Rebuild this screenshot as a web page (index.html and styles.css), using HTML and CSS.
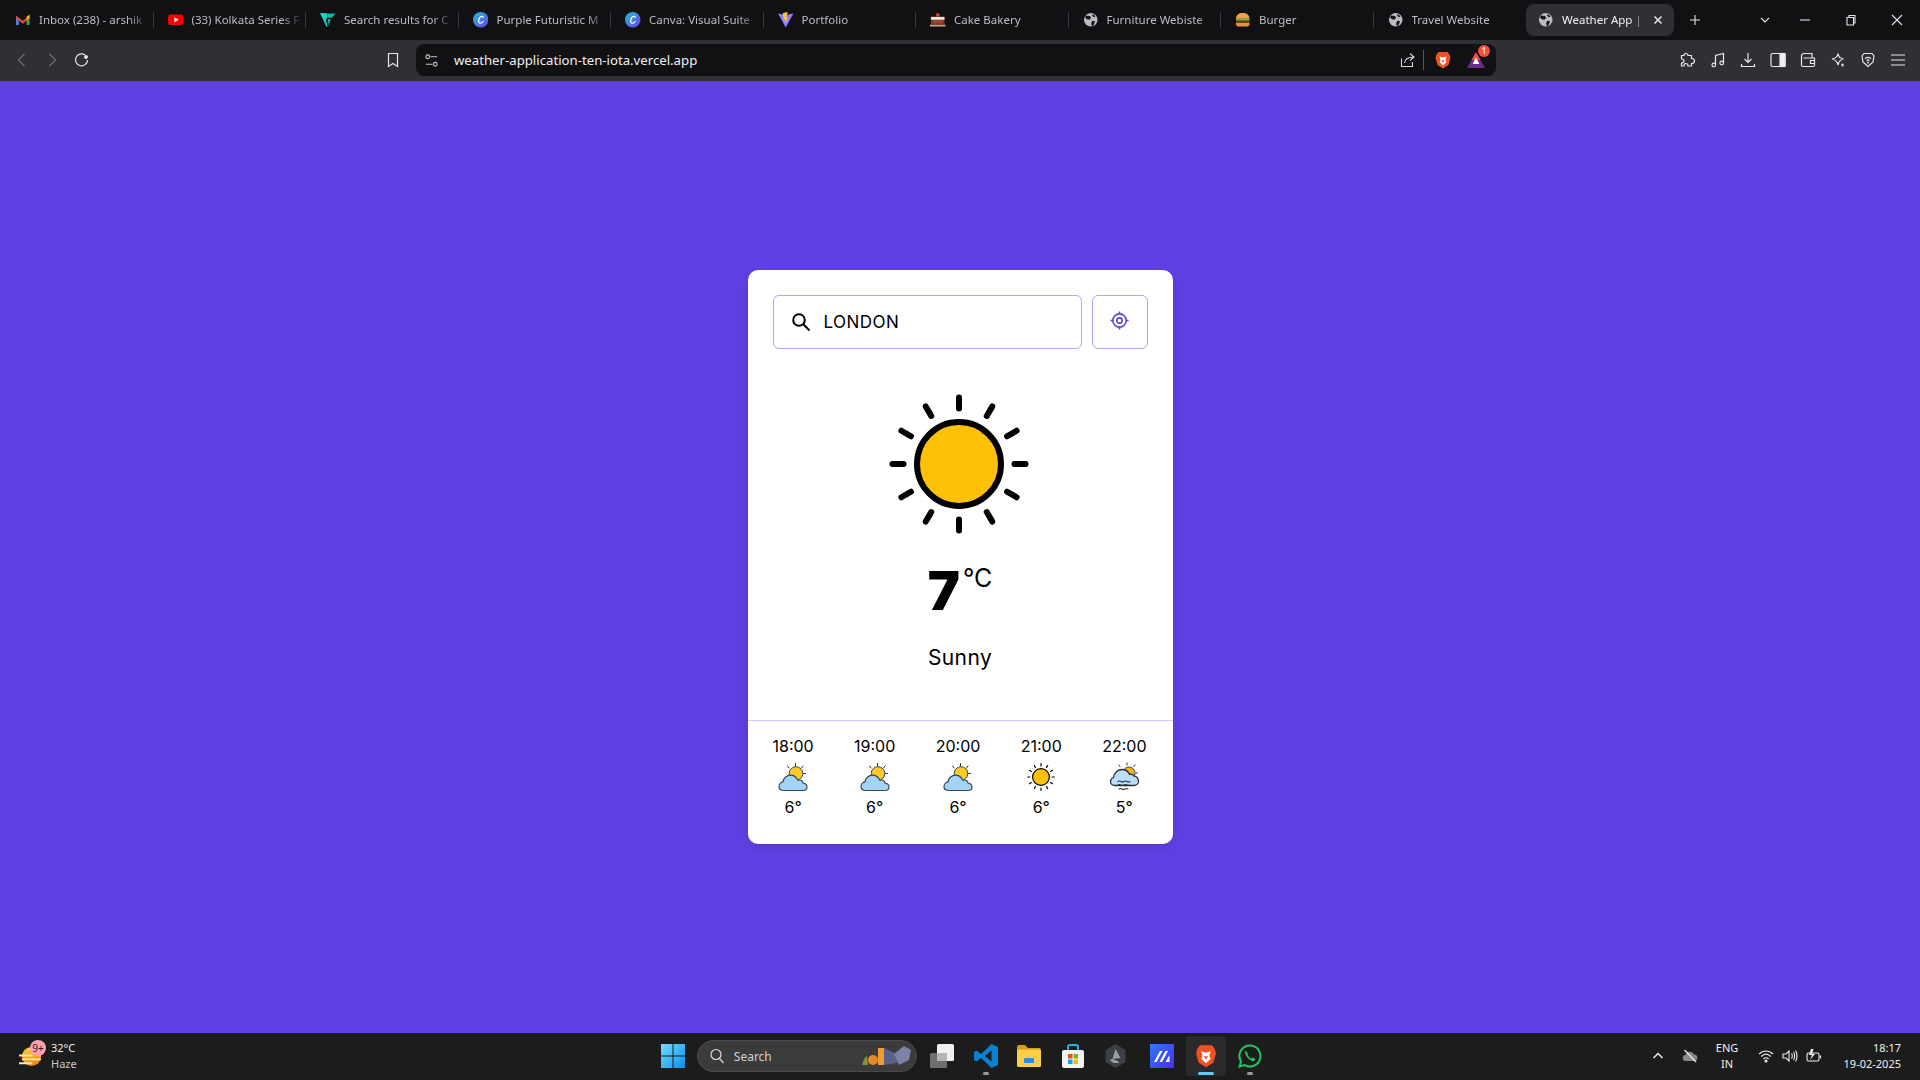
FILE: index.html
```html
<!DOCTYPE html>
<html lang="en">
<head>
<meta charset="utf-8">
<title>Weather App</title>
<link rel="stylesheet" href="styles.css">
</head>
<body>
<svg class="defs" width="0" height="0" aria-hidden="true">
  <defs>
    <symbol id="globe" viewBox="0 0 16 16">
      <circle cx="8" cy="8" r="7" fill="#b9bcc2"/>
      <path d="M3 3.500 7 4l1.500 2L6.500 8 4 7.500 2 5.500ZM9.500 9l3 .5-1.500 4-2 1.200-.5-3.200ZM10 2l3 2.500-1.500 1L9.500 4Z" fill="#17171b"/>
    </symbol>
    <symbol id="sun" viewBox="-75 -75 150 150">
      <g stroke="#000" stroke-width="6" stroke-linecap="round">
        <path d="M0-55.500V-66.500"/>
        <path d="M0-55.500V-66.500" transform="rotate(30)"/>
        <path d="M0-55.500V-66.500" transform="rotate(60)"/>
        <path d="M0-55.500V-66.500" transform="rotate(90)"/>
        <path d="M0-55.500V-66.500" transform="rotate(120)"/>
        <path d="M0-55.500V-66.500" transform="rotate(150)"/>
        <path d="M0-55.500V-66.500" transform="rotate(180)"/>
        <path d="M0-55.500V-66.500" transform="rotate(210)"/>
        <path d="M0-55.500V-66.500" transform="rotate(240)"/>
        <path d="M0-55.500V-66.500" transform="rotate(270)"/>
        <path d="M0-55.500V-66.500" transform="rotate(300)"/>
        <path d="M0-55.500V-66.500" transform="rotate(330)"/>
      </g>
      <circle r="42" fill="#ffc107" stroke="#000" stroke-width="6"/>
    </symbol>
    <symbol id="cloudsun" viewBox="0 0 30 30">
      <g stroke="#333" stroke-width="1" stroke-linecap="round">
        <path d="M17.500 1.500V4M9.500 4l1.500 2M25 4l-1.500 2M27.500 11.500H25"/>
      </g>
      <circle cx="18" cy="11.500" r="6.800" fill="#ffca28" stroke="#37474f" stroke-width="1"/>
      <path d="M6 28.500C3 28.500 1 27 1 24.500 1 22 3 20 5 19.800 5.500 16 9 13.200 12.500 13.200 16 13.200 18.500 15.500 20 18.200 21.500 17.800 23 18 24 19 24.600 19.600 25 20.500 25 21 27.500 21.500 29 23 29 25 29 27.500 27 28.500 25 28.500Z" fill="#a4d3f8" stroke="#37474f" stroke-width="1.200"/>
    </symbol>
    <symbol id="fog" viewBox="0 0 30 30">
      <g stroke="#333" stroke-width="1" stroke-linecap="round">
        <path d="M18 1V3M10 3l1 1.500M26 3l-1 1.500M28.500 11H27M28 16.500l-1-.5"/>
      </g>
      <circle cx="20" cy="11" r="6" fill="#fbb117" stroke="#37474f" stroke-width="1"/>
      <path d="M6 23.500C3 23.500 1.500 21.500 1.500 19.500 1.500 17.500 3 16 4.500 15.500 5 11 9 7.500 13 7.500 17 7.500 19.500 10 20.500 12.500 22 12 24 12.500 25 14 27.500 14 29.500 16.500 29.500 19 29.500 22 27 23.500 25 23.500Z" fill="#bbdefb" stroke="#263238" stroke-width="1.300"/>
      <g fill="none" stroke="#263238" stroke-width="1.100" stroke-linecap="round">
        <path d="M9 19.500q1.500-1 3 0t3 0 3 0 3 0"/>
        <path d="M9 23q1.500-1 3 0t3 0 3 0 3 0"/>
        <path d="M10 27q1.500-1 3 0t3 0 3 0"/>
      </g>
    </symbol>
  </defs>
</svg>

<header class="tabstrip">
  <div class="tab sep">
    <svg class="fav" viewBox="0 0 16 16"><path d="M1 4v9.500h3V7.500L1 4Z" fill="#4285f4"/><path d="M15 4v9.500h-3V7.500L15 4Z" fill="#34a853"/><path d="M1 3.500 8 9l7-5.500V6.500L8 12 1 6.500Z" fill="#ea4335"/><path d="M12 4.800 15 2.500V6l-3 2.500Z" fill="#fbbc04"/></svg>
    <span class="title">Inbox (238) - arshik</span>
  </div>
  <div class="tab sep">
    <svg class="fav" viewBox="0 0 16 16"><rect y="2.500" width="16" height="11" rx="3" fill="#f00"/><path d="M6.500 5.500v5L11 8Z" fill="#fff"/></svg>
    <span class="title">(33) Kolkata Series F</span>
  </div>
  <div class="tab sep">
    <svg class="fav" viewBox="0 0 16 16"><path d="M0 1h6.500L8 5 6 8.500 8 15h-1.500Z" fill="#19d3c5"/><path d="M7 1.500h9L12 6H8.500ZM8 7.500h3L9 14Z" fill="#13b8ab"/></svg>
    <span class="title">Search results for C</span>
  </div>
  <div class="tab sep">
    <svg class="fav" viewBox="0 0 16 16"><defs><linearGradient id="cv" x1="0" y1="0" x2="1" y2="1"><stop offset="0" stop-color="#1dc4d6"/><stop offset="1" stop-color="#6a3df0"/></linearGradient></defs><circle cx="8" cy="8" r="8" fill="url(#cv)"/><path d="M10.500 5.500C10.500 4 8 4 6.800 6S5.200 11 7 11.500C8.500 11.800 10 10.500 10.500 9.800" fill="none" stroke="#fff" stroke-width="1.300" stroke-linecap="round"/></svg>
    <span class="title">Purple Futuristic M</span>
  </div>
  <div class="tab sep">
    <svg class="fav" viewBox="0 0 16 16"><circle cx="8" cy="8" r="8" fill="url(#cv)"/><path d="M10.500 5.500C10.500 4 8 4 6.800 6S5.200 11 7 11.500C8.500 11.800 10 10.500 10.500 9.800" fill="none" stroke="#fff" stroke-width="1.300" stroke-linecap="round"/></svg>
    <span class="title">Canva: Visual Suite</span>
  </div>
  <div class="tab sep">
    <svg class="fav" viewBox="0 0 16 16"><path d="M0 1.500 8 3l8-1.500L8 16Z" fill="#8d7bff"/><path d="M5 1l5-1-1.500 6 2-.5L7 13l.8-5.500-2 .5Z" fill="#ffc81f"/></svg>
    <span class="title">Portfolio</span>
  </div>
  <div class="tab sep">
    <svg class="fav" viewBox="0 0 16 16"><rect x="0" y="13" width="16" height="2" fill="#c9a27c"/><rect x="1" y="6" width="14" height="7" fill="#7b3b2c"/><rect x="1" y="5" width="14" height="3" fill="#efe4d6"/><rect x="3" y="9" width="10" height="2" fill="#b5443a"/><circle cx="8" cy="3" r="2" fill="#d43a3a"/></svg>
    <span class="title">Cake Bakery</span>
  </div>
  <div class="tab sep">
    <svg class="fav"><use href="#globe"/></svg>
    <span class="title">Furniture Webiste</span>
  </div>
  <div class="tab sep">
    <svg class="fav" viewBox="0 0 16 16"><path d="M1 7C1 3 4 1 8 1s7 2 7 6Z" fill="#f2a24a"/><rect x="1" y="7" width="14" height="2" fill="#7db546"/><rect x="1" y="9" width="14" height="2" fill="#6b3a22"/><path d="M1 11h14v1.500c0 1.500-1 2.500-2.500 2.500h-9C2 15 1 14 1 12.500Z" fill="#e89238"/></svg>
    <span class="title">Burger</span>
  </div>
  <div class="tab">
    <svg class="fav"><use href="#globe"/></svg>
    <span class="title">Travel Website</span>
  </div>
  <div class="tab active">
    <svg class="fav"><use href="#globe"/></svg>
    <span class="title">Weather App |</span>
    <svg class="tabclose" viewBox="0 0 10 10"><path d="M1.500 1.500l7 7M8.500 1.500l-7 7"/></svg>
  </div>
  <button class="ctl plus"><svg viewBox="0 0 12 12"><path d="M6 1v10M1 6h10"/></svg></button>
  <div class="winctls">
    <button class="ctl tabmenu"><svg viewBox="0 0 12 12"><path d="M2 4l4 4 4-4"/></svg></button>
    <button class="ctl"><svg viewBox="0 0 12 12"><path d="M1 6h10"/></svg></button>
    <button class="ctl"><svg viewBox="0 0 12 12"><path d="M2 3.500h6.500V11H2ZM4 3.500V1.500h6V9H8.500"/></svg></button>
    <button class="ctl"><svg viewBox="0 0 12 12"><path d="M1 1l10 10M11 1L1 11"/></svg></button>
  </div>
</header>

<nav class="toolbar">
  <div class="navbtns">
    <button class="tbtn dim"><svg viewBox="0 0 16 16"><path d="M10.500 2 4.500 8l6 6"/></svg></button>
    <button class="tbtn dim"><svg viewBox="0 0 16 16"><path d="M5.500 2l6 6-6 6"/></svg></button>
    <button class="tbtn"><svg viewBox="0 0 16 16"><path d="M13.500 8A6 6 0 1 1 11 3"/><circle cx="12" cy="5" r="1.300" fill="#fff"/></svg></button>
  </div>
  <button class="tbtn bookmark"><svg viewBox="0 0 16 16"><path d="M3.500 1.500h9v13L8 11.500l-4.500 3Z"/></svg></button>
  <div class="addr">
    <svg class="sliders" viewBox="0 0 16 16"><circle cx="4" cy="4" r="2"/><path d="M7 4h7M2 12h7"/><circle cx="12" cy="12" r="2"/></svg>
    <span class="url">weather-application-ten-iota.vercel.app</span>
    <svg class="share" viewBox="0 0 16 16"><path d="M10 1.500l4 3.500-4 3.500M14 5C8 5 5 7.500 4.500 11M12.500 10v4.500H1.500v-8"/></svg>
    <span class="addrsep"></span>
    <svg class="lion" viewBox="0 0 16 18"><path d="M3.500 1h9l2 2.500L15.500 7l-2 7L8 17.500 2.500 14l-2-7 1-3.500Z" fill="#f1501f"/><path d="M4.500 5.500 8 6.500l3.500-1-1 3.500 1 2L8 14.500 4.500 11l1-2Z" fill="#fff"/><path d="M6.500 9h1l.5 1 .5-1h1L8 12Z" fill="#f1501f"/></svg>
    <span class="rewards">
      <svg viewBox="0 0 16 14"><path d="M8 0l8 14H0Z" fill="#6b2d8b"/><path d="M8 0l4 7H4Z" fill="#f2503a"/><path d="M8 4.500l3 6H5Z" fill="#fff"/></svg>
      <b class="rbadge">1</b>
    </span>
  </div>
  <div class="tools">
    <button class="tbtn"><svg viewBox="0 0 16 16"><path d="M6 1.500c1.500 0 2 1 2 2h3.500v3c1.500 0 3 .5 3 2.500s-1.500 2.500-3 2.500v2.500H8c0-1.500-.5-2.500-2-2.500s-2 1-2 2.500H1.500V11C3 11 4 10.300 4 9S3 7 1.500 7V3.500H4c0-1 .5-2 2-2Z"/></svg></button>
    <button class="tbtn"><svg viewBox="0 0 16 16"><path d="M5.500 13V3.500l8-2V11"/><circle cx="3.800" cy="13" r="1.800"/><circle cx="11.700" cy="11" r="1.800"/></svg></button>
    <button class="tbtn"><svg viewBox="0 0 16 16"><path d="M8 1v9M4.500 7 8 10.500 11.500 7M1.500 12v2.500h13V12"/></svg></button>
    <button class="tbtn"><svg viewBox="0 0 16 16"><rect x="1" y="1.500" width="14" height="13" rx="1.500"/><rect x="10" y="1.500" width="5" height="13" fill="#f0f0f0"/></svg></button>
    <button class="tbtn"><svg viewBox="0 0 16 16"><path d="M1.500 4V13a1.500 1.500 0 0 0 1.500 1.500h10a1.500 1.500 0 0 0 1.500-1.500V6H3.500"/><path d="M1.500 4A2.500 2.500 0 0 1 4 1.500h8V6M14.500 8.500H10.500v3h4"/></svg></button>
    <button class="tbtn"><svg viewBox="0 0 16 16"><path d="M8 1.500c.5 3.500 2 5 5.500 5.500-2.500.5-3.500 1.500-4.500 3L8 13C7.500 10 5.500 8 2 7 5.500 6.500 7.500 5 8 1.500Z"/><path d="M12.500 11.500v3M11 13h3"/></svg></button>
    <button class="tbtn"><svg viewBox="0 0 16 16"><path d="M4 1.500h8l2 2.500-1 6-5 4.500L3 10 2 4Z"/><path d="M5 6.500c2-1.500 4-1.500 6 0M6.500 8.500c1-.7 2-.7 3 0"/><circle cx="8" cy="10.500" r=".4"/></svg></button>
    <button class="tbtn"><svg viewBox="0 0 16 16"><path d="M1 3h14M1 8h14M1 13h14"/></svg></button>
  </div>
</nav>

<main class="stage">
  <section class="card">
    <div class="searchrow">
      <label class="searchbox">
        <svg class="mag" viewBox="0 0 20 20"><circle cx="8" cy="8" r="5.800"/><path d="M12.300 12.300 18.500 18.500"/></svg>
        <span class="query">LONDON</span>
      </label>
      <button class="locate">
        <svg viewBox="0 0 20 20"><circle cx="10" cy="10" r="7"/><circle cx="10" cy="10" r="2.800"/><path d="M10 .5V3M10 17v2.500M.5 10H3M17 10h2.500"/></svg>
      </button>
    </div>
    <div class="current">
      <svg class="bigsun"><use href="#sun"/></svg>
      <div class="temp"><span class="deg">7</span><span class="unit">°C</span></div>
      <p class="cond">Sunny</p>
    </div>
    <ul class="forecast">
      <li class="slot"><span class="hour">18:00</span><svg class="fi"><use href="#cloudsun"/></svg><span class="ft">6°</span></li>
      <li class="slot"><span class="hour">19:00</span><svg class="fi"><use href="#cloudsun"/></svg><span class="ft">6°</span></li>
      <li class="slot"><span class="hour">20:00</span><svg class="fi"><use href="#cloudsun"/></svg><span class="ft">6°</span></li>
      <li class="slot"><span class="hour">21:00</span><svg class="fi"><use href="#sun"/></svg><span class="ft">6°</span></li>
      <li class="slot"><span class="hour">22:00</span><svg class="fi"><use href="#fog"/></svg><span class="ft">5°</span></li>
    </ul>
  </section>
</main>

<footer class="taskbar">
  <div class="tb-left">
    <span class="wx-ico">
      <svg viewBox="0 0 24 22"><defs><linearGradient id="wx" x1="0" y1="0" x2="0" y2="1"><stop offset="0" stop-color="#ffd23c"/><stop offset="1" stop-color="#ef7d0a"/></linearGradient></defs><circle cx="13" cy="11" r="10" fill="url(#wx)"/><path d="M0 9h14v2H0ZM3 13h20v2H3ZM0 17h14v2H0Z" fill="#ffe9a8"/></svg>
      <b class="wx-badge">9+</b>
    </span>
    <div class="wx-text"><span class="wx-t">32°C</span><span class="wx-c">Haze</span></div>
  </div>
  <div class="tb-center">
    <svg class="app winlogo" viewBox="0 0 24 24"><defs><linearGradient id="wl" x1="0" y1="0" x2="1" y2="1"><stop offset="0" stop-color="#6fe0ff"/><stop offset="1" stop-color="#0f8dea"/></linearGradient></defs><path d="M0 0h11.500v11.500H0ZM12.500 0H24v11.500H12.500ZM0 12.500h11.500V24H0ZM12.500 12.500H24V24H12.500Z" fill="url(#wl)"/></svg>
    <div class="tsearch">
      <svg class="tmag" viewBox="0 0 16 16"><circle cx="7" cy="6.500" r="5"/><path d="M10.500 10.500 14.500 15"/></svg>
      <span class="tsearch-t">Search</span>
      <svg class="tart" viewBox="0 0 50 22"><path d="M0 20c2-6 3-8 5-9l1 9Z" fill="#7f9a32"/><circle cx="11" cy="15" r="5" fill="#e58a2b"/><rect x="16" y="3" width="7" height="17" fill="#f19b30"/><path d="M22 3l13 6v9l-13 2Z" fill="#59618a"/><path d="M32 9l10-8 7 4-2 10-10 5Z" fill="#7d82a6"/></svg>
    </div>
    <svg class="app taskview" viewBox="0 0 24 24"><rect x="0" y="9" width="17" height="15" rx="1.500" fill="#6f6f6f"/><rect x="7" y="0" width="17" height="17" rx="1.500" fill="#f0f0f0"/><rect x="7" y="9" width="10" height="8" fill="#b5b5b5"/></svg>
    <span class="appwrap"><svg class="app" viewBox="0 0 24 24"><path d="M17.500 0 24 3v18l-6.500 3L7 14l-4.500 3.500L0 16V8l2.500-1.500L7 10ZM17.500 6.500 11 12l6.500 5.500Z" fill="#0b82d1"/></svg><i class="dot"></i></span>
    <svg class="app explorer" viewBox="0 0 24 22"><path d="M0 2a2 2 0 0 1 2-2h6l3 3h11a2 2 0 0 1 2 2v4H0Z" fill="#d99c1d"/><rect y="4.500" width="24" height="17.500" rx="1.500" fill="#fbd046"/><rect x="7" y="13" width="10" height="5" rx="1" fill="#1d93d8"/></svg>
    <svg class="app store" viewBox="0 0 24 24"><path d="M7 7V3a2 2 0 0 1 2-2h6a2 2 0 0 1 2 2v4" fill="none" stroke="#25b0e6" stroke-width="2"/><rect x="1" y="6" width="22" height="18" rx="2" fill="#f4f4f4"/><rect x="7" y="10" width="4.500" height="4.500" fill="#f25022"/><rect x="12.500" y="10" width="4.500" height="4.500" fill="#7fba00"/><rect x="7" y="15.500" width="4.500" height="4.500" fill="#00a4ef"/><rect x="12.500" y="15.500" width="4.500" height="4.500" fill="#ffb900"/></svg>
    <svg class="app hexa" viewBox="0 0 20 24"><path d="M10 0l10 6v12l-10 6L0 18V6Z" fill="#3c4045"/><path d="M10 5l5 9-8 1Zm-6 11 3-1 5 2 2 2H8Z" fill="#9aa0a6"/></svg>
    <svg class="app" viewBox="0 0 24 24"><defs><linearGradient id="mm" x1="0" y1="0" x2="1" y2="1"><stop offset="0" stop-color="#2f7bf5"/><stop offset="1" stop-color="#4a2cf0"/></linearGradient></defs><rect width="24" height="24" fill="url(#mm)"/><path d="M4 18 10 7h2.500l-6 11ZM9.500 18l6-11H18l-6 11ZM15.500 18l4-7v7Z" fill="#fff"/></svg>
    <span class="brave">
      <svg class="app" viewBox="0 0 16 18"><path d="M3.500 1h9l2 2.500L15.500 7l-2 7L8 17.500 2.500 14l-2-7 1-3.500Z" fill="#f1501f"/><path d="M4.500 5.500 8 6.500l3.500-1-1 3.500 1 2L8 14.500 4.500 11l1-2Z" fill="#fff"/><path d="M6.500 9h1l.5 1 .5-1h1L8 12Z" fill="#f1501f"/></svg>
      <i class="bar"></i>
    </span>
    <span class="appwrap"><svg class="app" viewBox="0 0 24 24"><path d="M12 1.500A10.500 10.500 0 0 0 3 17.500L1.500 22.500l5.200-1.400A10.500 10.500 0 1 0 12 1.500Z" fill="none" stroke="#22c55e" stroke-width="2"/><path d="M8 6.500c-1 1-1.500 2.500 0 5s3.500 4.500 6 5.500c2 .5 3-.5 3.500-2l-3-1.500-1 1.200c-2-.8-3-2-4-4L9.700 9.500 8 6.500Z" fill="#22c55e"/></svg><i class="dot"></i></span>
  </div>
  <div class="tb-right">
    <svg class="tray chev" viewBox="0 0 12 12"><path d="M1.500 8 6 3.500 10.500 8"/></svg>
    <svg class="tray cloudoff" viewBox="0 0 16 16"><path d="M4 13a3 3 0 0 1-.5-6 4.500 4.500 0 0 1 8.500-.5A3.200 3.200 0 0 1 12 13Z" fill="#8a8a8a" stroke="none"/><path d="M2.500 2 14 14" stroke="#e8e8e8" stroke-width="1.300"/></svg>
    <div class="lang"><span>ENG</span><span>IN</span></div>
    <svg class="tray wifi" viewBox="0 0 16 16"><path d="M1 6c4-4 10-4 14 0M3.200 8.500c3-3 6.600-3 9.600 0M5.400 11c1.600-1.500 3.600-1.500 5.200 0"/><circle cx="8" cy="13" r="1" fill="#eee"/></svg>
    <svg class="tray spk" viewBox="0 0 16 16"><path d="M1 6v4h3l3 3V3L4 6ZM9.500 5.500c1 1.500 1 3.500 0 5M11.500 4c1.500 2.500 1.500 5.500 0 8M13.500 2.500c2 3.500 2 7.500 0 11"/></svg>
    <svg class="tray batt" viewBox="0 0 16 16"><rect x="1" y="5" width="12" height="8" rx="1.500"/><path d="M14.500 7.500v3"/><path d="M5 1 3 7h3l-2 5 5-6H6l1.500-5Z" fill="#eee" stroke="none"/></svg>
    <div class="clock"><span>18:17</span><span>19-02-2025</span></div>
  </div>
</footer>
</body>
</html>
```
FILE: styles.css
```css
* { box-sizing: border-box; }
html, body { height: 100%; }
body {
  margin: 0;
  height: 1080px;
  overflow: hidden;
  display: flex;
  flex-direction: column;
  background: #6040e4;
  font-family: "Noto Sans", "Open Sans", sans-serif;
  color: #fff;
}
.defs { position: absolute; }
button { border: 0; padding: 0; background: none; color: inherit; font: inherit; }
ul, p { margin: 0; padding: 0; }
li { list-style: none; }

/* Tab strip */
.tabstrip {
  flex: 0 0 40px;
  display: flex;
  align-items: center;
  padding-left: 1px;
  background: #111114;
}
.tab {
  position: relative;
  flex: 0 0 152.5px;
  height: 32px;
  display: flex;
  align-items: center;
  padding-left: 14px;
  gap: 8.5px;
  font-size: 11.5px;
  color: #bdbec4;
}
.tab.sep::after {
  content: "";
  position: absolute;
  right: 0;
  top: 8px;
  height: 16px;
  width: 1px;
  background: #3a3a40;
}
.fav { flex: 0 0 15.5px; width: 15.5px; height: 15.5px; }
.title {
  width: 109px;
  margin-top: -1px;
  white-space: nowrap;
  overflow: hidden;
  -webkit-mask-image: linear-gradient(90deg, #000 82%, rgba(0, 0, 0, .25) 96%);
  mask-image: linear-gradient(90deg, #000 82%, rgba(0, 0, 0, .25) 96%);
}
.tab.active {
  flex: 0 0 148px;
  border-radius: 8px;
  background: #2f2f34;
  color: #f0f0f3;
  padding-left: 12px;
}
.tab.active .title { width: 84px; }
.tabclose { width: 10px; height: 10px; flex: 0 0 10px; margin-left: -2px; fill: none; stroke: #e6e6ea; stroke-width: 1.500; }
.ctl { display: flex; align-items: center; justify-content: center; width: 46px; height: 32px; }
.ctl svg { width: 12px; height: 12px; fill: none; stroke: #e4e4e8; stroke-width: 1.100; }
.plus { margin-left: -2px; }
.tabmenu { margin-right: -6px; }
.winctls { display: flex; margin-left: auto; }

/* Toolbar */
.toolbar {
  flex: 0 0 41px;
  display: flex;
  align-items: center;
  padding: 0 0 1px 7px;
  background: #2f2f34;
}
.navbtns { display: flex; }
.tbtn { display: flex; align-items: center; justify-content: center; width: 30px; height: 30px; }
.tbtn svg { width: 16px; height: 16px; fill: none; stroke: #e8e8ec; stroke-width: 1.200; }
.tbtn.dim svg { stroke: #6d6e75; }
.bookmark { margin-left: 281px; }
.addr {
  margin-left: 8px;
  width: 1080px;
  height: 32px;
  display: flex;
  align-items: center;
  padding: 0 11px 0 8px;
  border-radius: 8px;
  background: #111114;
}
.sliders { width: 15px; height: 15px; fill: none; stroke: #c8c8cc; stroke-width: 1.100; }
.url { margin-left: 15px; font-size: 13.2px; color: #f0f0f3; }
.share { margin-left: auto; width: 16px; height: 16px; fill: none; stroke: #d8d8dc; stroke-width: 1.100; }
.addrsep { width: 1px; height: 20px; margin: 0 11px 0 7px; background: #55555c; }
.lion { width: 16px; height: 18px; }
.rewards { position: relative; display: flex; margin-left: 16px; }
.rewards svg { width: 18px; height: 16px; }
.rbadge {
  position: absolute;
  top: -7px;
  right: -5px;
  width: 12px;
  height: 12px;
  border-radius: 50%;
  background: #f2503a;
  font-size: 8px;
  line-height: 12px;
  font-weight: 500;
  text-align: center;
}
.tools { display: flex; margin-left: 176.5px; }

/* Stage */
.stage {
  flex: 1;
  display: flex;
  align-items: center;
  justify-content: center;
}
.card {
  width: 425px;
  height: 574px;
  display: flex;
  flex-direction: column;
  padding-top: 25px;
  border-radius: 10px;
  background: #fff;
  color: #000;
  font-family: Inter, "Noto Sans", sans-serif;
  box-shadow: 0 4px 14px rgba(0, 0, 0, .12);
}
.searchrow { display: flex; gap: 10px; padding: 0 25px; }
.searchbox {
  flex: 1;
  height: 54px;
  display: flex;
  align-items: center;
  padding-left: 17px;
  border: 1px solid #b6a6fb;
  border-radius: 6px;
}
.mag { width: 20px; height: 20px; fill: none; stroke: #000; stroke-width: 2; }
.query { margin-left: 13px; font-size: 17px; letter-spacing: .45px; }
.locate {
  flex: 0 0 56px;
  height: 54px;
  display: flex;
  align-items: center;
  justify-content: center;
  padding-bottom: 3px;
  border: 1px solid #b6a6fb;
  border-radius: 6px;
}
.locate svg { width: 19px; height: 19px; fill: none; stroke: #6040e4; stroke-width: 1.700; }
.current {
  flex: 1;
  display: flex;
  flex-direction: column;
  align-items: center;
  padding-top: 40px;
  border-bottom: 1px solid #d4c9ff;
}
.bigsun { width: 150px; height: 150px; margin-left: -3px; }
.temp { display: flex; align-items: flex-start; margin-top: 21px; }
.deg { font-size: 54px; line-height: 62px; font-weight: 900; }
.unit { margin-left: 3px; font-size: 25px; line-height: 37px; }
.cond { margin-top: 22px; font-size: 21px; line-height: 28px; letter-spacing: .4px; }
.forecast {
  flex: 0 0 123px;
  display: flex;
  justify-content: space-between;
  padding: 13px 26px 0 25px;
}
.slot { display: flex; flex-direction: column; align-items: center; }
.hour { font-size: 16px; line-height: 24px; }
.fi { width: 30px; height: 30px; margin-top: 4px; }
.ft { margin-top: 3px; font-size: 16px; line-height: 24px; }

/* Taskbar */
.taskbar {
  flex: 0 0 47px;
  display: grid;
  grid-template-columns: 1fr auto 1fr;
  align-items: center;
  padding-bottom: 1px;
  background: #1c1c1c;
  font-size: 11px;
  color: #f0f0f0;
}
.tb-left { display: flex; align-items: center; padding-left: 19px; gap: 9px; }
.wx-ico { position: relative; display: flex; }
.wx-ico svg { width: 23px; height: 21px; }
.wx-badge {
  position: absolute;
  top: -6px;
  left: 11px;
  width: 16px;
  height: 16px;
  border-radius: 50%;
  background: #ffa1b4;
  color: #222;
  font-size: 10px;
  font-weight: 400;
  line-height: 16px;
  text-align: center;
}
.wx-text { display: flex; flex-direction: column; line-height: 16px; }
.wx-c { color: #c8c8c8; }
.tb-center { display: flex; align-items: center; padding-left: 2.6px; }
.app { display: block; width: 24px; height: 24px; }
.winlogo { margin-right: 12px; }
.tsearch {
  width: 220px;
  height: 32px;
  display: flex;
  align-items: center;
  padding: 0 4px 0 11px;
  border-radius: 16px;
  background: #3b3b3b;
  border: 1px solid #4a4a4a;
  font-size: 12px;
  color: #cfcfcf;
}
.tmag { width: 16px; height: 16px; fill: none; stroke: #dedede; stroke-width: 1.200; }
.tsearch-t { margin-left: 9px; }
.tart { width: 50px; height: 22px; margin-left: auto; }
.taskview { margin: 0 20px 0 13px; }
.appwrap { position: relative; display: block; }
.dot {
  position: absolute;
  left: 9px;
  top: 28px;
  width: 6px;
  height: 3px;
  border-radius: 2px;
  background: #9a9a9a;
}
.explorer { margin-left: 19px; }
.store { margin-left: 20px; }
.hexa { width: 21px; margin: 0 24px 0 20px; }
.brave {
  position: relative;
  display: flex;
  align-items: center;
  justify-content: center;
  width: 40px;
  height: 40px;
  margin: 0 12px;
  border-radius: 4px;
  background: #2a2a2a;
}
.bar {
  position: absolute;
  bottom: 1px;
  left: 12px;
  width: 16px;
  height: 3px;
  border-radius: 2px;
  background: #60c8f5;
}
.tb-right { display: flex; align-items: center; justify-content: flex-end; padding-right: 19px; }
.tray { width: 16px; height: 16px; fill: none; stroke: #eee; stroke-width: 1.100; }
.chev { width: 12px; height: 12px; stroke-width: 1.500; }
.cloudoff { margin-left: 18px; }
.lang { display: flex; flex-direction: column; align-items: center; width: 24px; margin-left: 17px; line-height: 16px; }
.wifi { margin-left: 19px; }
.spk { margin-left: 8px; }
.batt { margin-left: 8px; }
.clock { display: flex; flex-direction: column; align-items: flex-end; margin-left: 21.5px; line-height: 16px; }
```
